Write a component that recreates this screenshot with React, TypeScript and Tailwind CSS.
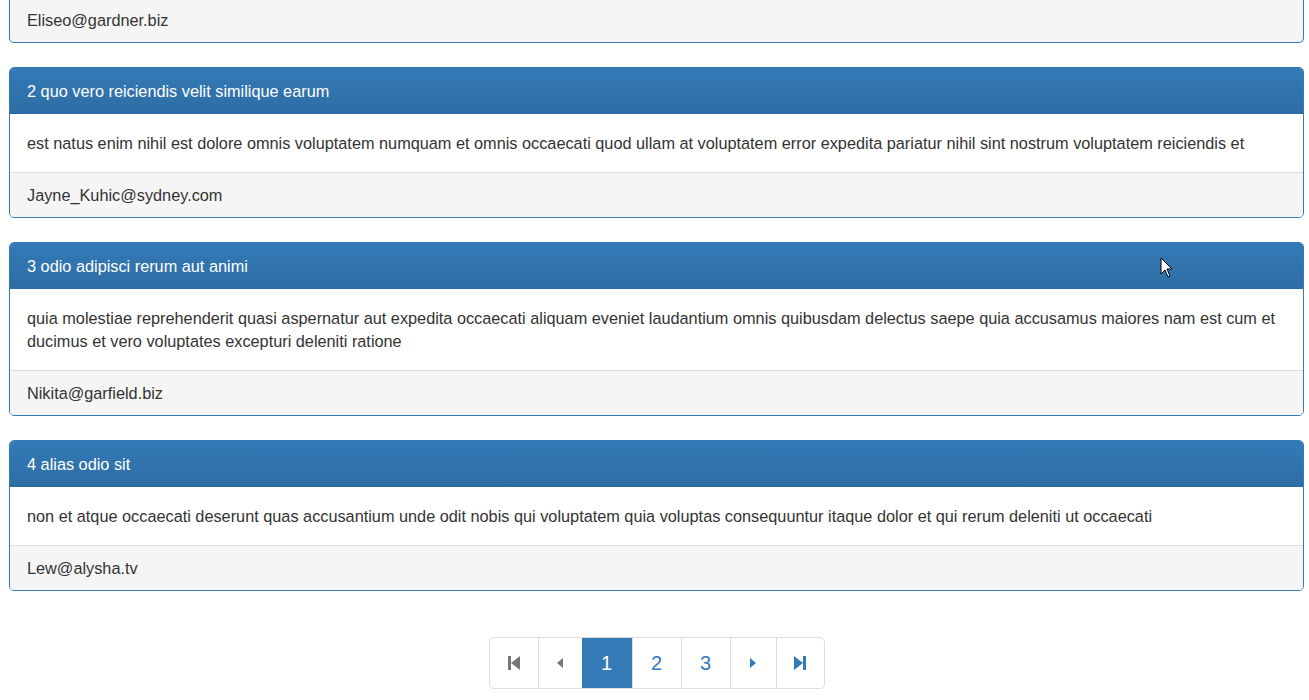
import React from "react";

type Post = { id: number; title: string; body: string; email: string };

const POSTS: Post[] = [
  {
    id: 2,
    title: "quo vero reiciendis velit similique earum",
    body: "est natus enim nihil est dolore omnis voluptatem numquam et omnis occaecati quod ullam at voluptatem error expedita pariatur nihil sint nostrum voluptatem reiciendis et",
    email: "Jayne_Kuhic@sydney.com",
  },
  {
    id: 3,
    title: "odio adipisci rerum aut animi",
    body: "quia molestiae reprehenderit quasi aspernatur aut expedita occaecati aliquam eveniet laudantium omnis quibusdam delectus saepe quia accusamus maiores nam est cum et ducimus et vero voluptates excepturi deleniti ratione",
    email: "Nikita@garfield.biz",
  },
  {
    id: 4,
    title: "alias odio sit",
    body: "non et atque occaecati deserunt quas accusantium unde odit nobis qui voluptatem quia voluptas consequuntur itaque dolor et qui rerum deleniti ut occaecati",
    email: "Lew@alysha.tv",
  },
];

function Panel({ post }: { post: Post }) {
  return (
    <div className="mt-[24px] rounded-[5px] border border-[#337ab7] bg-white">
      <div className="rounded-t-[4px] bg-gradient-to-b from-[#337ab7] to-[#2e6da4] px-[17px] h-[46px] flex items-center text-white">
        {post.id} {post.title}
      </div>
      <div className="px-[17px] py-[17.5px] leading-[23px] text-[#333]">{post.body}</div>
      <div className="rounded-b-[4px] border-t border-[#ddd] bg-[#f5f5f5] px-[17px] h-[45px] flex items-center text-[#333]">
        {post.email}
      </div>
    </div>
  );
}

function StepIcon({ dir, color }: { dir: "l" | "r"; color: string }) {
  return (
    <svg width="14" height="16" viewBox="0 0 14 16" fill={color}>
      {dir === "l" ? (
        <>
          <rect x="1" y="1" width="3" height="14" />
          <polygon points="13,1 13,15 4,8" />
        </>
      ) : (
        <>
          <polygon points="1,1 1,15 10,8" />
          <rect x="10" y="1" width="3" height="14" />
        </>
      )}
    </svg>
  );
}

function TriIcon({ dir, color }: { dir: "l" | "r"; color: string }) {
  return (
    <svg width="8" height="12" viewBox="0 0 8 12" fill={color}>
      {dir === "l" ? <polygon points="7,1 7,11 1,6" /> : <polygon points="1,1 1,11 7,6" />}
    </svg>
  );
}

function Pager() {
  const cell = "h-full flex items-center justify-center border-l border-[#ddd]";
  return (
    <div className="flex justify-center mt-[46px]">
      <div className="flex h-[52px] rounded-[5px] border border-[#ddd] overflow-hidden text-[20px] text-[#337ab7]">
        <div className="w-[48px] h-full flex items-center justify-center">
          <StepIcon dir="l" color="#777" />
        </div>
        <div className={`${cell} w-[44px]`}>
          <TriIcon dir="l" color="#777" />
        </div>
        <div className="w-[50px] h-full flex items-center justify-center bg-[#337ab7] text-white">1</div>
        <div className={`${cell} w-[49px]`}>2</div>
        <div className={`${cell} w-[49px]`}>3</div>
        <div className={`${cell} w-[46px]`}>
          <TriIcon dir="r" color="#337ab7" />
        </div>
        <div className={`${cell} w-[48px]`}>
          <StepIcon dir="r" color="#337ab7" />
        </div>
      </div>
    </div>
  );
}

export default function App() {
  return (
    <div
      className="relative w-[1309px] h-[700px] overflow-hidden bg-white text-[16.3px]"
      style={{ fontFamily: '"Liberation Sans", Arial, sans-serif' }}
    >
      <div className="ml-[9px] w-[1295px]">
        <div className="h-[43px] rounded-b-[5px] border-x border-b border-[#337ab7] bg-[#f5f5f5] px-[17px] pb-[2px] flex items-center text-[#333]">
          Eliseo@gardner.biz
        </div>
        {POSTS.map((p) => (
          <Panel key={p.id} post={p} />
        ))}
        <Pager />
      </div>
      <svg className="absolute left-[1160px] top-[257px]" width="14" height="22" viewBox="0 0 14 22">
        <polygon points="1,1 1,17 5,13 8,20 10,19 7,12 12,12" fill="#fff" stroke="#000" strokeWidth="1" />
      </svg>
    </div>
  );
}
